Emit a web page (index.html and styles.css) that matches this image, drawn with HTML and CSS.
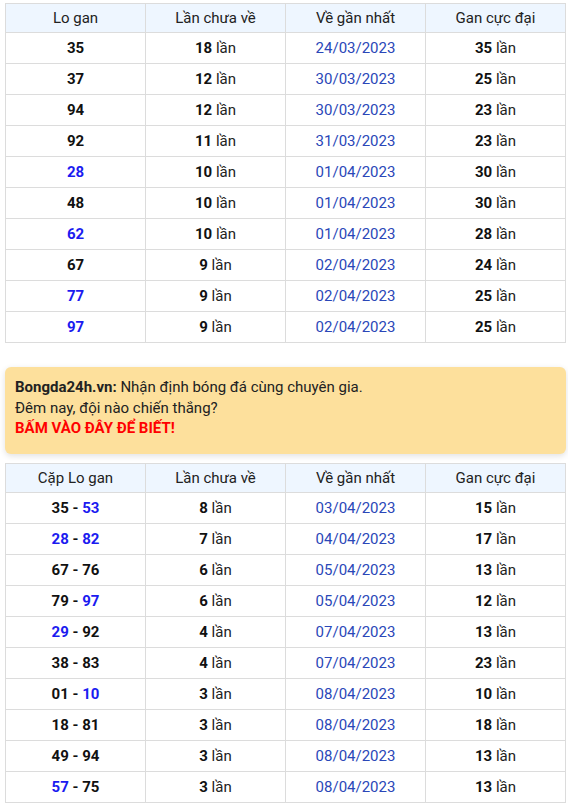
FILE: index.html
```html
<!DOCTYPE html>
<html lang="vi">
<head>
<meta charset="utf-8">
<link rel="stylesheet" href="styles.css">
</head>
<body>
<div class="wrap">
  <table class="gan">
    <thead>
      <tr><th>Lo gan</th><th>Lần chưa về</th><th>Về gần nhất</th><th>Gan cực đại</th></tr>
    </thead>
    <tbody>
      <tr><td><b>35</b></td><td><b>18</b> lần</td><td class="date">24/03/2023</td><td><b>35</b> lần</td></tr>
      <tr><td><b>37</b></td><td><b>12</b> lần</td><td class="date">30/03/2023</td><td><b>25</b> lần</td></tr>
      <tr><td><b>94</b></td><td><b>12</b> lần</td><td class="date">30/03/2023</td><td><b>23</b> lần</td></tr>
      <tr><td><b>92</b></td><td><b>11</b> lần</td><td class="date">31/03/2023</td><td><b>23</b> lần</td></tr>
      <tr><td><b class="blue">28</b></td><td><b>10</b> lần</td><td class="date">01/04/2023</td><td><b>30</b> lần</td></tr>
      <tr><td><b>48</b></td><td><b>10</b> lần</td><td class="date">01/04/2023</td><td><b>30</b> lần</td></tr>
      <tr><td><b class="blue">62</b></td><td><b>10</b> lần</td><td class="date">01/04/2023</td><td><b>28</b> lần</td></tr>
      <tr><td><b>67</b></td><td><b>9</b> lần</td><td class="date">02/04/2023</td><td><b>24</b> lần</td></tr>
      <tr><td><b class="blue">77</b></td><td><b>9</b> lần</td><td class="date">02/04/2023</td><td><b>25</b> lần</td></tr>
      <tr><td><b class="blue">97</b></td><td><b>9</b> lần</td><td class="date">02/04/2023</td><td><b>25</b> lần</td></tr>
    </tbody>
  </table>

  <div class="ad">
    <div><b>Bongda24h.vn:</b> Nhận định bóng đá cùng chuyên gia.</div>
    <div>Đêm nay, đội nào chiến thắng?</div>
    <div class="cta">BẤM VÀO ĐÂY ĐỂ BIẾT!</div>
  </div>

  <table class="gan">
    <thead>
      <tr><th>Cặp Lo gan</th><th>Lần chưa về</th><th>Về gần nhất</th><th>Gan cực đại</th></tr>
    </thead>
    <tbody>
      <tr><td><b>35</b> <b>-</b> <b class="blue">53</b></td><td><b>8</b> lần</td><td class="date">03/04/2023</td><td><b>15</b> lần</td></tr>
      <tr><td><b class="blue">28</b> <b>-</b> <b class="blue">82</b></td><td><b>7</b> lần</td><td class="date">04/04/2023</td><td><b>17</b> lần</td></tr>
      <tr><td><b>67</b> <b>-</b> <b>76</b></td><td><b>6</b> lần</td><td class="date">05/04/2023</td><td><b>13</b> lần</td></tr>
      <tr><td><b>79</b> <b>-</b> <b class="blue">97</b></td><td><b>6</b> lần</td><td class="date">05/04/2023</td><td><b>12</b> lần</td></tr>
      <tr><td><b class="blue">29</b> <b>-</b> <b>92</b></td><td><b>4</b> lần</td><td class="date">07/04/2023</td><td><b>13</b> lần</td></tr>
      <tr><td><b>38</b> <b>-</b> <b>83</b></td><td><b>4</b> lần</td><td class="date">07/04/2023</td><td><b>23</b> lần</td></tr>
      <tr><td><b>01</b> <b>-</b> <b class="blue">10</b></td><td><b>3</b> lần</td><td class="date">08/04/2023</td><td><b>10</b> lần</td></tr>
      <tr><td><b>18</b> <b>-</b> <b>81</b></td><td><b>3</b> lần</td><td class="date">08/04/2023</td><td><b>18</b> lần</td></tr>
      <tr><td><b>49</b> <b>-</b> <b>94</b></td><td><b>3</b> lần</td><td class="date">08/04/2023</td><td><b>13</b> lần</td></tr>
      <tr><td><b class="blue">57</b> <b>-</b> <b>75</b></td><td><b>3</b> lần</td><td class="date">08/04/2023</td><td><b>13</b> lần</td></tr>
    </tbody>
  </table>
</div>
</body>
</html>
```
FILE: styles.css
```css
html, body {
  margin: 0;
  padding: 0;
  background: #fff;
}
body {
  font-family: Roboto, "Liberation Sans", Arial, sans-serif;
  font-size: 15px;
  color: #222;
}
.wrap {
  padding: 3px 2px 0 5px;
}
.gan {
  width: 561px;
  border-collapse: collapse;
  table-layout: fixed;
}
.gan th,
.gan td {
  border: 1px solid #dcdcdc;
  text-align: center;
  padding: 0;
  width: 139px;
}
.gan th {
  height: 28px;
  background: #eef6ff;
  font-weight: 400;
  color: #222;
}
.gan td {
  height: 30px;
}
.gan b {
  font-weight: 700;
  color: #111;
}
.gan b.blue {
  color: #1b1bf0;
}
.gan td.date {
  color: #2a47b8;
}
.ad {
  margin: 24px 0 9px;
  width: 541px;
  background: #fde09c;
  border-radius: 6px;
  padding: 10px 10px 15px;
  line-height: 20.5px;
  color: #222;
  box-shadow: 0 2px 6px rgba(0,0,0,0.12);
}
.ad b {
  font-weight: 700;
}
.cta {
  color: #f00;
  font-weight: 700;
}
```
